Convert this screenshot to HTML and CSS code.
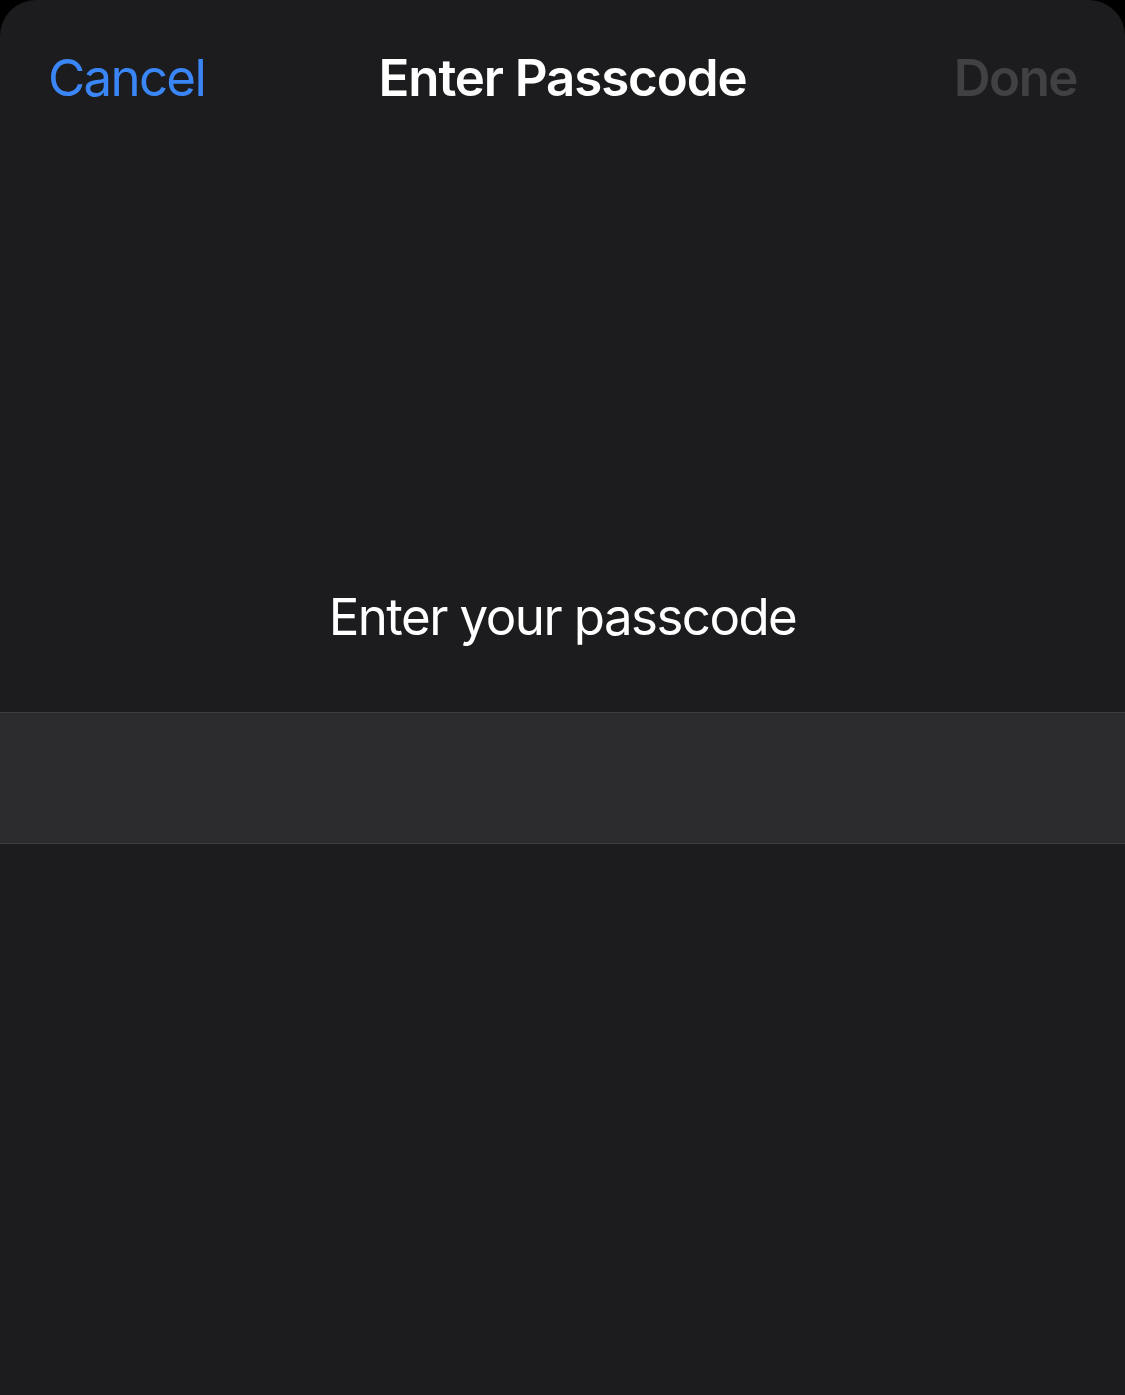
FILE: index.html
```html
<!DOCTYPE html>
<html>
<head>
<meta charset="utf-8">
<link rel="stylesheet" href="styles.css">
</head>
<body>
<div class="sheet">
  <div class="nav">
    <span class="nav-btn cancel">Cancel</span>
    <span class="nav-title">Enter Passcode</span>
    <span class="nav-btn done">Done</span>
  </div>
  <div class="prompt">Enter your passcode</div>
  <div class="field"></div>
</div>
</body>
</html>
```
FILE: styles.css
```css
html, body {
  margin: 0;
  padding: 0;
  background: #000;
  height: 100%;
}
body {
  font-family: Inter, "Noto Sans", sans-serif;
  -webkit-font-smoothing: antialiased;
}
.sheet {
  background: #1c1c1e;
  height: 1395px;
  border-radius: 36px 36px 0 0;
  display: flex;
  flex-direction: column;
  overflow: hidden;
}
.nav {
  height: 156px;
  display: flex;
  align-items: center;
  justify-content: space-between;
  padding: 0 48px 0 48px;
  position: relative;
}
.nav-btn {
  font-size: 51px;
  line-height: 60px;
}
.cancel {
  color: #3a86f6;
  letter-spacing: -1.7px;
}
.done {
  color: #414143;
  font-weight: 600;
  letter-spacing: -1.5px;
}
.nav-title {
  position: absolute;
  left: 0;
  right: 0;
  text-align: center;
  font-size: 51px;
  line-height: 60px;
  font-weight: 600;
  color: #fff;
  letter-spacing: -1.1px;
  pointer-events: none;
}
.prompt {
  margin-top: 431px;
  text-align: center;
  color: #fff;
  font-size: 51px;
  line-height: 60px;
  letter-spacing: -1.55px;
}
.field {
  margin-top: 65px;
  height: 130px;
  background: #2c2c2e;
  border-top: 1px solid #3d3d40;
  border-bottom: 1px solid #3d3d40;
}
```
